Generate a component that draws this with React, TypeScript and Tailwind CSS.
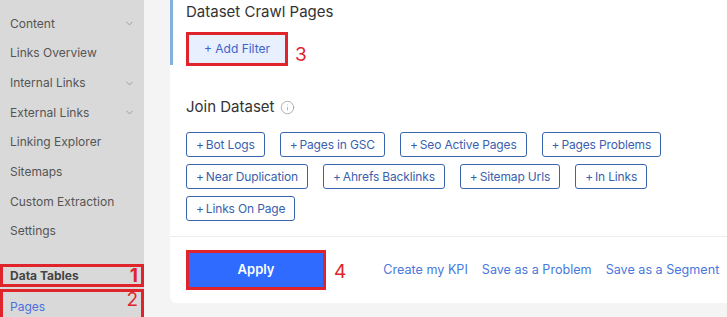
import { ChevronDown, Info } from 'lucide-react';

const navItems = [
  { label: 'Content', chevron: true },
  { label: 'Links Overview', chevron: false },
  { label: 'Internal Links', chevron: true },
  { label: 'External Links', chevron: true },
  { label: 'Linking Explorer', chevron: false },
  { label: 'Sitemaps', chevron: false },
  { label: 'Custom Extraction', chevron: false },
  { label: 'Settings', chevron: false },
];

const datasets = [
  'Bot Logs',
  'Pages in GSC',
  'Seo Active Pages',
  'Pages Problems',
  'Near Duplication',
  'Ahrefs Backlinks',
  'Sitemap Urls',
  'In Links',
  'Links On Page',
];

function Marker({ n, className }: { n: string; className?: string }) {
  return (
    <span className={`text-[19px] leading-none text-[#e0242b] ${className ?? ''}`}>{n}</span>
  );
}

export default function App() {
  return (
    <div
      className="flex h-[317px] w-[727px] overflow-hidden bg-[#f4f4f4]"
      style={{ fontFamily: 'Inter, "Noto Sans", sans-serif' }}
    >
      {/* Sidebar */}
      <aside className="flex w-[144px] shrink-0 flex-col bg-[#d9d9d9] pt-[9px]">
        {navItems.map((item) => (
          <div
            key={item.label}
            className="flex h-[29.7px] items-center justify-between pl-[10px] pr-[9px] text-[12px] text-[#555]"
          >
            <span>{item.label}</span>
            {item.chevron && <ChevronDown size={11} strokeWidth={1.6} className="text-[#888]" />}
          </div>
        ))}
        <div className="mt-[18px] flex h-[23px] items-center justify-between border-[3px] border-[#e0242b] pl-[7px] pr-[3px] text-[12px] font-bold text-[#444]">
          <span>Data Tables</span>
          <Marker n="1" />
        </div>
        <div className="mt-[2px] flex h-[28px] items-start justify-between border-[3px] border-b-0 border-[#e0242b] pl-[7px] pr-[3px] text-[12px] text-[#4b6fe0]">
          <span className="mt-[6px]">Pages</span>
          <Marker n="2" className="mt-[-2px]" />
        </div>
      </aside>

      {/* Main */}
      <main className="flex flex-1 flex-col pl-[26px]">
        <section className="flex h-[236px] flex-col bg-white">
          <div className="flex h-[65px] flex-col border-l-[3px] border-[#80b3dd] pl-[13px]">
            <h2 className="mt-[2px] text-[15px] leading-[20px] text-[#333]">Dataset Crawl Pages</h2>
            <div className="mt-[10px] flex items-end gap-[7px]">
              <div className="border-[3px] border-[#e0242b]">
                <button className="flex h-[28px] w-[96px] items-center justify-center bg-[#e8efff] text-[12px] text-[#3c64c8]">
                  + Add Filter
                </button>
              </div>
              <Marker n="3" className="mb-[2px]" />
            </div>
          </div>

          <div className="flex flex-col pl-[16px]">
            <h2 className="mt-[32px] flex items-center gap-[5px] text-[15px] leading-[20px] text-[#333]">
              Join Dataset
              <Info size={15} strokeWidth={1.2} className="text-[#999]" />
            </h2>
            <div className="mt-[15px] flex w-[500px] flex-wrap gap-x-[15px] gap-y-[7px]">
              {datasets.map((d) => (
                <button
                  key={d}
                  className="flex h-[25px] items-center rounded-[3px] border border-[#3a64b0] px-[9px] text-[12px] tracking-[-0.15px] text-[#3a5fae]"
                >
                  +&#8201;{d}
                </button>
              ))}
            </div>
          </div>
        </section>

        <section className="flex h-[67px] items-center rounded-bl-[6px] border-t border-[#ececec] bg-white pl-[16px]">
          <div className="border-[3px] border-[#e0242b]">
            <button className="flex h-[34px] w-[134px] items-center justify-center bg-[#2f6bff] text-[13px] font-semibold text-white">
              Apply
            </button>
          </div>
          <Marker n="4" className="ml-[8px] mt-[2px]" />
          <div className="ml-[37px] flex gap-[14px] whitespace-nowrap text-[12.6px] text-[#4a78dc]">
            <span>Create my KPI</span>
            <span>Save as a Problem</span>
            <span>Save as a Segment</span>
          </div>
        </section>
      </main>
    </div>
  );
}
